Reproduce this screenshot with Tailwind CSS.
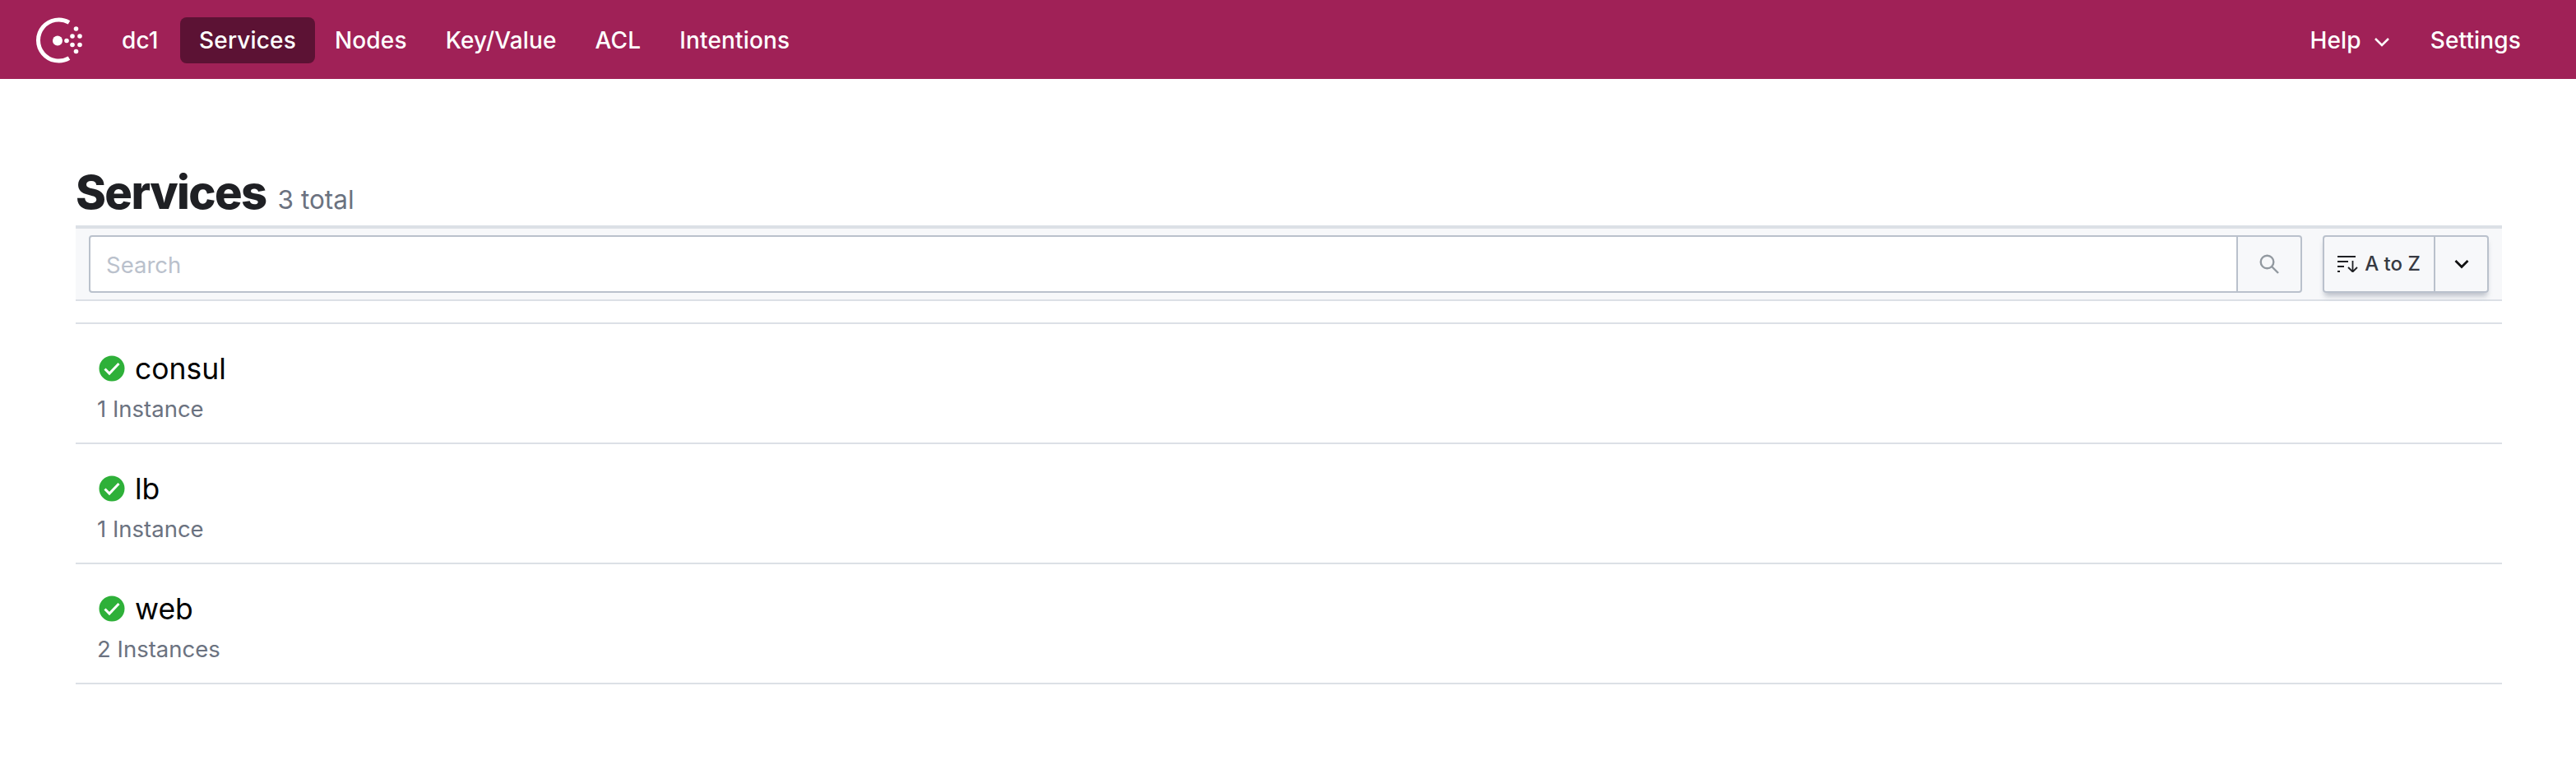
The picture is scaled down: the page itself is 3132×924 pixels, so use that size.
<!DOCTYPE html>
<html lang="en">
	<head>
		<meta charset="UTF-8" />
		<title>Services - Consul</title>
		<script src="https://cdn.jsdelivr.net/npm/@tailwindcss/browser@4"></script>
	</head>
	<body class="bg-white font-['Inter',sans-serif] h-[924px] overflow-hidden">
		<header class="h-[96px] bg-[#a02157] flex items-center justify-between text-white text-[28px] font-medium tracking-[0.15px] pt-[2px] pl-[44px] pr-[67px]">
			<nav class="flex items-center">
				<svg class="w-[58px] h-[56px] mr-[42px]" viewBox="0 0 58 56" fill="white">
					<path d="M40 6.350A25 25 0 1 0 40 49.650" fill="none" stroke="white" stroke-width="5" />
					<circle cx="26" cy="28.500" r="6" />
					<circle cx="37" cy="28.500" r="2.800" />
					<circle cx="48.500" cy="14" r="2.800" />
					<circle cx="44" cy="23" r="2.800" />
					<circle cx="53" cy="23" r="2.800" />
					<circle cx="44" cy="33.500" r="2.800" />
					<circle cx="53" cy="33.500" r="2.800" />
					<circle cx="48.500" cy="41.500" r="2.800" />
				</svg>
				<a class="px-[4px] mr-[22px]">dc1</a>
				<a class="h-[56px] flex items-center px-[23.500px] rounded-[8px] bg-[#5c1234]">Services</a>
				<a class="px-[23.500px]">Nodes</a>
				<a class="px-[23.500px]">Key/Value</a>
				<a class="px-[23.500px]">ACL</a>
				<a class="px-[23.500px]">Intentions</a>
			</nav>
			<nav class="flex items-center">
				<a class="flex items-center mr-[49px]">
					Help
					<svg class="w-[20px] h-[20px] ml-[15px] mt-[4px]" viewBox="0 0 20 20" fill="none" stroke="white" stroke-width="2.500"><path d="M2 6l8 8 8-8" /></svg>
				</a>
				<a>Settings</a>
			</nav>
		</header>
		<main class="pl-[92px] pr-[90px]">
			<h1 class="flex items-baseline pt-[104px] h-[178px] text-[56px] leading-[68px] font-extrabold tracking-[-1.6px] text-[#1f2024]">
				Services
				<span class="ml-[14px] text-[31.500px] tracking-normal font-normal text-[#6b7280]">3 total</span>
			</h1>
			<div class="h-[92px] bg-[#f7f8fa] border-t-4 border-b-2 border-[#dce0e6] flex items-center pl-[16px] pr-[16px]">
				<div class="flex-1 h-[70px] flex border-2 border-[#bac1cc] rounded-[4px]">
					<input class="flex-1 bg-white pl-[19px] pr-[20px] pt-[4px] text-[27.500px] placeholder:text-[#bac1cc] rounded-l-[4px]" placeholder="Search" />
					<div class="w-[78px] border-l-2 border-[#bac1cc] flex items-center justify-center">
						<svg class="w-[24px] h-[24px]" viewBox="0 0 24 24" fill="none" stroke="#9299a0" stroke-width="2.400"><circle cx="9.500" cy="9.500" r="7.800" /><path d="M15 15l8 8" /></svg>
					</div>
				</div>
				<div class="ml-[25px] w-[202px] h-[70px] flex border-2 border-[#bac1cc] rounded-[4px] shadow-[0_6px_6px_-2px_rgba(100,110,130,0.4)]">
					<div class="flex-1 flex items-center justify-center text-[24px] font-medium text-[#373a42]">
						<svg class="w-[25px] h-[20px] mr-[8px]" viewBox="0 0 25 20" fill="none" stroke="#1f2024" stroke-width="1.800"><path d="M0 1h22M0 7h13M0 13h8M0 19h3M18.500 6v13M13 14l5.500 5.500L24 14" /></svg>
						A to Z
					</div>
					<div class="w-[65px] border-l-2 border-[#bac1cc] flex items-center justify-center">
						<svg class="w-[18px] h-[18px]" viewBox="0 0 18 18" fill="none" stroke="#111" stroke-width="2.800"><path d="M1.500 5L9 12.500 16.500 5" /></svg>
					</div>
				</div>
			</div>
			<ul class="mt-[26px] border-t-2 border-[#dce0e6]">
				<li class="h-[146px] border-b-2 border-[#dce0e6] pl-[26px] pt-[36px]">
					<div class="flex items-center h-[36px] text-[35.500px] text-black">
						<svg class="w-[32px] h-[32px] ml-[2px] mr-[12px]" viewBox="0 0 32 32"><circle cx="16" cy="16" r="15.500" fill="#2eb039" /><path d="M7.500 16.500l5.500 5.500L24.500 10" fill="none" stroke="white" stroke-width="3" /></svg>
						<span class="mt-[2px]">consul</span>
					</div>
					<p class="mt-[13px] text-[27.500px] leading-[36px] text-[#6b7280]">1 Instance</p>
				</li>
				<li class="h-[146px] border-b-2 border-[#dce0e6] pl-[26px] pt-[36px]">
					<div class="flex items-center h-[36px] text-[35.500px] text-black">
						<svg class="w-[32px] h-[32px] ml-[2px] mr-[12px]" viewBox="0 0 32 32"><circle cx="16" cy="16" r="15.500" fill="#2eb039" /><path d="M7.500 16.500l5.500 5.500L24.500 10" fill="none" stroke="white" stroke-width="3" /></svg>
						<span class="mt-[2px]">lb</span>
					</div>
					<p class="mt-[13px] text-[27.500px] leading-[36px] text-[#6b7280]">1 Instance</p>
				</li>
				<li class="h-[146px] border-b-2 border-[#dce0e6] pl-[26px] pt-[36px]">
					<div class="flex items-center h-[36px] text-[35.500px] text-black">
						<svg class="w-[32px] h-[32px] ml-[2px] mr-[12px]" viewBox="0 0 32 32"><circle cx="16" cy="16" r="15.500" fill="#2eb039" /><path d="M7.500 16.500l5.500 5.500L24.500 10" fill="none" stroke="white" stroke-width="3" /></svg>
						<span class="mt-[2px]">web</span>
					</div>
					<p class="mt-[13px] text-[27.500px] leading-[36px] text-[#6b7280]">2 Instances</p>
				</li>
			</ul>
		</main>
	</body>
</html>
